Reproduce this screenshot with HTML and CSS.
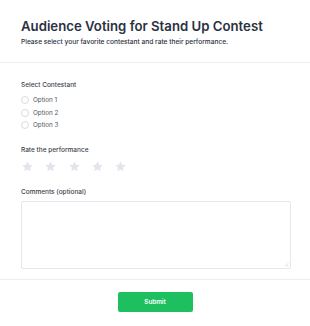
FILE: index.html
```html
<!DOCTYPE html>
<html>
<head>
<meta charset="utf-8">
<link rel="stylesheet" href="styles.css">
</head>
<body>
<div class="form">
  <header class="head">
    <h1 class="title">Audience Voting for Stand Up Contest</h1>
    <p class="sub">Please select your favorite contestant and rate their performance.</p>
  </header>
  <main class="body">
    <div class="group">
      <div class="label">Select Contestant</div>
      <label class="opt"><span class="radio"></span>Option 1</label>
      <label class="opt"><span class="radio"></span>Option 2</label>
      <label class="opt"><span class="radio"></span>Option 3</label>
    </div>
    <div class="group">
      <div class="label">Rate the performance</div>
      <div class="stars">
        <svg class="star" viewBox="0 0 24 24"><path d="M12 2.5l2.9 6.2 6.8.8-5 4.7 1.3 6.7L12 17.6l-6 3.3 1.3-6.7-5-4.7 6.8-.8z"/></svg>
        <svg class="star" viewBox="0 0 24 24"><path d="M12 2.5l2.9 6.2 6.8.8-5 4.7 1.3 6.7L12 17.6l-6 3.3 1.3-6.7-5-4.7 6.8-.8z"/></svg>
        <svg class="star" viewBox="0 0 24 24"><path d="M12 2.5l2.9 6.2 6.8.8-5 4.7 1.3 6.7L12 17.6l-6 3.3 1.3-6.7-5-4.7 6.8-.8z"/></svg>
        <svg class="star" viewBox="0 0 24 24"><path d="M12 2.5l2.9 6.2 6.8.8-5 4.7 1.3 6.7L12 17.6l-6 3.3 1.3-6.7-5-4.7 6.8-.8z"/></svg>
        <svg class="star" viewBox="0 0 24 24"><path d="M12 2.5l2.9 6.2 6.8.8-5 4.7 1.3 6.7L12 17.6l-6 3.3 1.3-6.7-5-4.7 6.8-.8z"/></svg>
      </div>
    </div>
    <div class="group comments-group">
      <div class="label">Comments (optional)</div>
      <div class="ta-wrap">
        <textarea class="comments"></textarea>
        <svg class="grip" viewBox="0 0 5 5"><path d="M4.5 1L1 4.5M4.5 3L3 4.5" stroke="#cfd1d8" stroke-width="0.7"/></svg>
      </div>
    </div>
  </main>
  <footer class="foot">
    <button class="submit">Submit</button>
  </footer>
</div>
</body>
</html>
```
FILE: styles.css
```css
* { box-sizing: border-box; }
html, body { margin: 0; padding: 0; background: #fff; }
body { font-family: Inter, "Noto Sans", sans-serif; color: #2b3142; }
.form { width: 310px; }
.head { padding: 18px 21px 16px; border-bottom: 1px solid #eeeef0; }
.title { margin: 0; font-size: 13.2px; font-weight: 600; line-height: 16px; color: #2b3142; letter-spacing: 0; }
.sub { margin: 4px 0 0; font-size: 6.6px; font-weight: 500; line-height: 8px; color: #2b3142; }
.body { padding: 18px 21px 10px; display: flex; flex-direction: column; gap: 14px; }
.group { display: flex; flex-direction: column; }
.comments-group { margin-top: 1px; }
.label { font-size: 6.5px; font-weight: 500; line-height: 8px; color: #3b3f4a; margin-bottom: 5px; }
.opt { display: flex; align-items: center; gap: 4px; font-size: 6.3px; color: #4e5360; height: 12.5px; }
.radio { width: 8px; height: 8px; border: 1px solid #d8dae0; border-radius: 50%; }
.stars { display: flex; gap: 10.3px; padding-top: 1px; }
.star { width: 13px; height: 13px; fill: #e3e5ec; }
.ta-wrap { position: relative; width: 270px; }
.comments { width: 270px; height: 68px; border: 1.5px solid #e5e6ee; border-radius: 2px; resize: none; margin: 0; display: block; }
.grip { position: absolute; right: 2px; bottom: 2px; width: 5px; height: 5px; }
.foot { border-top: 1px solid #eeeef0; padding: 12px 0; display: flex; justify-content: center; }
.submit { width: 75px; height: 20px; border: none; border-radius: 2px; background: #1dbf5f; color: #fff; font-family: Inter, sans-serif; font-size: 6.3px; font-weight: 600; }
```
